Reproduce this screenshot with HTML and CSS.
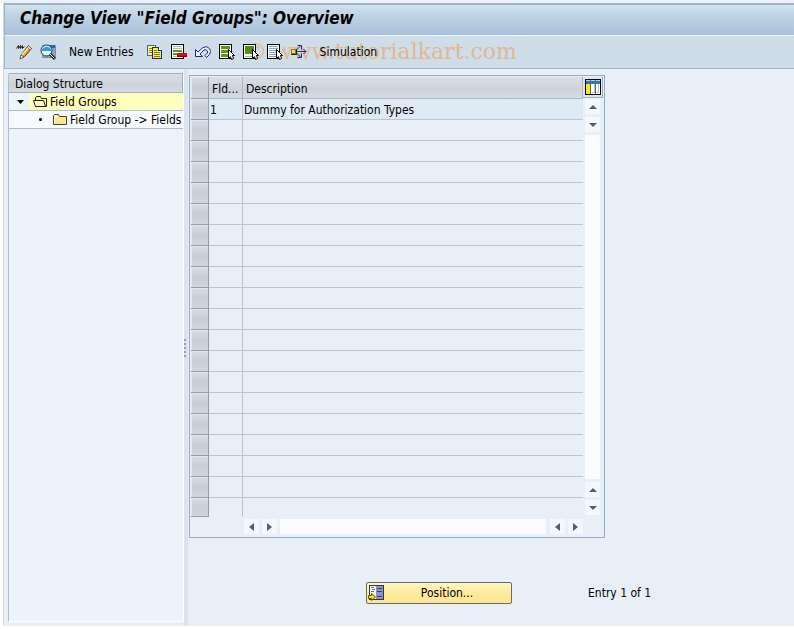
FILE: index.html
```html
<!DOCTYPE html>
<html lang="en">
<head>
    <meta charset="UTF-8">
    <meta name="viewport" content="width=device-width, initial-scale=1.0">
    <title>Change View "Field Groups": Overview</title>
    <link rel="stylesheet" href="styles.css">
</head>
<body>

<div class="window">
    <header class="title-bar">
        <h1>Change View "Field Groups": Overview</h1>
    </header>

    <div class="toolbar">
        <span class="watermark">© www.tutorialkart.com</span>
        <button type="button" class="tool" aria-label="Display / Change">
            <svg class="icon" viewBox="0 0 16 16">
                <path d="M.5 4.500l2-3v3l2-3v3l2-3v3l2-2" fill="none" stroke="#222"/>
                <path d="M12.500 1.500l3 3-7 8-4 2 1-4z" fill="#f4a040" stroke="#5a2a10"/>
                <path d="M12 4l-6 7" stroke="#fff0a0" stroke-width="1.500"/>
                <path d="M12.500 1.500l3 3-1.500 1.500-3-3z" fill="#f8d8b0" stroke="#5a2a10" stroke-width=".5"/>
                <path d="M4 15l1-4 3 2z" fill="#fff" stroke="#222" stroke-width=".6"/>
            </svg>
        </button>
        <button type="button" class="tool" aria-label="Details">
            <svg class="icon" viewBox="0 0 16 16">
                <path d="M2.500 1.500h13v12h-13z" fill="#8ba9c2" stroke="#7890a8"/>
                <path d="M3 1h12v3H3z" fill="#2469ac"/>
                <circle cx="6.500" cy="6.500" r="5.500" fill="#e9f6ff" stroke="#263647"/>
                <path d="M2 5q4.500-5 9 0v2H2z" fill="#2d9bef"/>
                <path d="M10 10l5 5" stroke="#222" stroke-width="3"/>
                <path d="M10 10l4.500 4.500" stroke="#e8eef4" stroke-width="1"/>
            </svg>
        </button>
        <button type="button" class="tool tool-text">New Entries</button>
        <button type="button" class="tool" aria-label="Copy As">
            <svg class="icon" viewBox="0 0 16 16" shape-rendering="crispEdges">
                <path d="M.5 1.500h8v10h-8z" fill="#ffff63" stroke="#5c5c98"/>
                <path d="M2 4.500h3M2 6.500h3M2 8.500h3" stroke="#77779a"/>
                <path d="M5.500 3.500h6l3 3v8h-9z" fill="#fff21c" stroke="#2020a0"/>
                <path d="M11.500 3.500v3h3" fill="#fff" stroke="#2020a0"/>
                <path d="M7 6.500h3M7 8.500h6M7 10.500h6M7 12.500h6" stroke="#77773a"/>
            </svg>
        </button>
        <button type="button" class="tool" aria-label="Delete">
            <svg class="icon" viewBox="0 0 16 16" shape-rendering="crispEdges">
                <path d="M.5 .5h12v14H.5z" fill="#fff" stroke="#000"/>
                <path d="M2 2.500h9M2 4.500h9M2 12.500h5" stroke="#a8bbc8"/>
                <path d="M2 6h9v2H2zM2 9h4v2H2z" fill="#5f9c08"/>
                <path d="M6 9h10v4H6z" fill="#e60012"/>
                <path d="M6 12h10v1H6z" fill="#8c0010"/>
            </svg>
        </button>
        <button type="button" class="tool" aria-label="Undo Change">
            <svg class="icon" viewBox="0 0 16 16">
                <path d="M.5 5.500v7h7l-2.500-2.500 4-4q1.500-1 3 .5t0 3l-2 2 1.500 2 3-3q2.500-3 0-6t-6.500-1l-5 4.500z" fill="#eaf4ff" stroke="#252590"/>
            </svg>
        </button>
        <button type="button" class="tool" aria-label="Select All">
            <svg class="icon" viewBox="0 0 16 16" shape-rendering="crispEdges">
                <path d="M.5 .5h12v14H.5z" fill="#fff" stroke="#000"/>
                <path d="M2 2h9v3H2zM2 6h9v3H2zM2 10h9v3H2z" fill="#5d980e"/>
                <path d="M9.500 5.500v9l2-2 1 3 2-1-1-3h2z" fill="#fff" stroke="#000" shape-rendering="auto"/>
            </svg>
        </button>
        <button type="button" class="tool" aria-label="Select Block">
            <svg class="icon" viewBox="0 0 16 16" shape-rendering="crispEdges">
                <path d="M.5 .5h12v14H.5z" fill="#fff" stroke="#000"/>
                <path d="M2 2h9v8H2z" fill="#568b10"/>
                <path d="M2 12.500h7" stroke="#9aafc0"/>
                <path d="M9.500 5.500v9l2-2 1 3 2-1-1-3h2z" fill="#fff" stroke="#000" shape-rendering="auto"/>
            </svg>
        </button>
        <button type="button" class="tool" aria-label="Deselect All">
            <svg class="icon" viewBox="0 0 16 16" shape-rendering="crispEdges">
                <path d="M.5 .5h12v14H.5z" fill="#fff" stroke="#000"/>
                <path d="M2 2.500h9M2 4.500h9M2 6.500h7M2 8.500h7M2 10.500h7M2 12.500h7" stroke="#87a4b8"/>
                <path d="M9.500 5.500v9l2-2 1 3 2-1-1-3h2z" fill="#fff" stroke="#000" shape-rendering="auto"/>
            </svg>
        </button>
        <button type="button" class="tool" aria-label="Field Transport">
            <svg class="icon" viewBox="0 0 16 16">
                <path d="M5 7.500h10M5 6.500l5-5M5 8.500l5 5M12.500 5l2.500 2.500-2.500 2.500M6.500 1.500h4v4M6.500 13.500h4v-4" fill="none" stroke="#252590"/>
                <path d="M.5 5.500h4v4h-4z" fill="#ffe81c" stroke="#8a6d10"/>
                <path d="M5.500 5v5.500H0" fill="none" stroke="#222"/>
            </svg>
        </button>
        <button type="button" class="tool tool-text">Simulation</button>
    </div>

    <div class="workspace">
        <aside class="sidebar">
            <h2>Dialog Structure</h2>
            <ul class="tree">
                <li class="tree-row">
                    <span class="toggle"><svg width="7" height="4" viewBox="0 0 7 4"><path d="M0 0h7L3.500 4z"/></svg></span>
                    <a href="#" class="tree-link selected">
                        <svg class="folder" viewBox="0 0 15 13">
                            <path d="M2.500 11.500v-9l1-1h4l1 2h5v8z" fill="#fff3a0" stroke="#222"/>
                            <path d="M2.500 11.500l-2-6h10l2 6z" fill="#fff8bf" stroke="#222"/>
                        </svg>Field Groups</a>
                </li>
                <li class="tree-row child">
                    <span class="toggle"><svg width="3" height="3" viewBox="0 0 3 3"><circle cx="1.500" cy="1.500" r="1.500"/></svg></span>
                    <a href="#" class="tree-link">
                        <svg class="folder" viewBox="0 0 15 13">
                            <path d="M.5 11.500v-9l1-1h4l1 2h7v8z" fill="#fbe98b" stroke="#444"/>
                            <path d="M1.500 10.500v-7h4" fill="none" stroke="#fffbd6"/>
                        </svg>Field Group -&gt; Fields</a>
                </li>
            </ul>
        </aside>

        <div class="splitter"><i></i><i></i><i></i><i></i><i></i></div>

        <main class="content">
            <section class="grid-panel">
                <table class="grid">
                    <colgroup><col class="col-select"><col class="col-id"><col></colgroup>
                    <thead>
                        <tr><th class="select"></th><th>Fld...</th><th>Description</th></tr>
                    </thead>
                    <tbody>
                        <tr class="filled"><td class="select"></td><td>1</td><td>Dummy for Authorization Types</td></tr>
                        <tr><td class="select"></td><td></td><td></td></tr>
                        <tr><td class="select"></td><td></td><td></td></tr>
                        <tr><td class="select"></td><td></td><td></td></tr>
                        <tr><td class="select"></td><td></td><td></td></tr>
                        <tr><td class="select"></td><td></td><td></td></tr>
                        <tr><td class="select"></td><td></td><td></td></tr>
                        <tr><td class="select"></td><td></td><td></td></tr>
                        <tr><td class="select"></td><td></td><td></td></tr>
                        <tr><td class="select"></td><td></td><td></td></tr>
                        <tr><td class="select"></td><td></td><td></td></tr>
                        <tr><td class="select"></td><td></td><td></td></tr>
                        <tr><td class="select"></td><td></td><td></td></tr>
                        <tr><td class="select"></td><td></td><td></td></tr>
                        <tr><td class="select"></td><td></td><td></td></tr>
                        <tr><td class="select"></td><td></td><td></td></tr>
                        <tr><td class="select"></td><td></td><td></td></tr>
                        <tr><td class="select"></td><td></td><td></td></tr>
                        <tr><td class="select"></td><td></td><td></td></tr>
                        <tr><td class="select"></td><td></td><td></td></tr>
                    </tbody>
                </table>

                <div class="side-tools">
                    <button type="button" class="configure" aria-label="Configuration">
                        <svg width="16" height="16" viewBox="0 0 16 16" shape-rendering="crispEdges">
                            <path d="M.5 .5h15v15H.5z" fill="#fff" stroke="#000"/>
                            <path d="M1 2h14v3H1z" fill="#2a78b8"/>
                            <path d="M1 1h14v1H1z" fill="#a5d8f5"/>
                            <path d="M1 5h5v10H1z" fill="#ffe600"/>
                            <path d="M9 5h1v9H7v-1h2zM13 5h1v9h-3v-1h2z" fill="#b8bec8"/>
                            <path d="M5.500 1v14M10.500 1v14" stroke="#5d6b78"/>
                        </svg>
                    </button>
                    <div class="scroll-v">
                        <button type="button" class="arrow" aria-label="Scroll up"><svg width="8" height="4" viewBox="0 0 8 4"><path d="M0 4h8L4 0z"/></svg></button>
                        <button type="button" class="arrow" aria-label="Page up"><svg width="8" height="4" viewBox="0 0 8 4"><path d="M0 0h8L4 4z"/></svg></button>
                        <div class="track"></div>
                        <button type="button" class="arrow" aria-label="Page down"><svg width="8" height="4" viewBox="0 0 8 4"><path d="M0 4h8L4 0z"/></svg></button>
                        <button type="button" class="arrow" aria-label="Scroll down"><svg width="8" height="4" viewBox="0 0 8 4"><path d="M0 0h8L4 4z"/></svg></button>
                    </div>
                </div>

                <div class="scroll-h">
                    <button type="button" class="arrow" aria-label="Scroll left"><svg width="5" height="8" viewBox="0 0 5 8"><path d="M5 0v8L0 4z"/></svg></button>
                    <button type="button" class="arrow" aria-label="Page left"><svg width="5" height="8" viewBox="0 0 5 8"><path d="M0 0v8l5-4z"/></svg></button>
                    <div class="track"></div>
                    <button type="button" class="arrow" aria-label="Page right"><svg width="5" height="8" viewBox="0 0 5 8"><path d="M5 0v8L0 4z"/></svg></button>
                    <button type="button" class="arrow" aria-label="Scroll right"><svg width="5" height="8" viewBox="0 0 5 8"><path d="M0 0v8l5-4z"/></svg></button>
                </div>
            </section>

            <div class="actions">
                <button type="button" class="position-button">
                    <svg width="16" height="16" viewBox="0 0 16 16" shape-rendering="crispEdges">
                        <path d="M1.500 .5h14v14h-14z" fill="#f2f5fc" stroke="#2c3550"/>
                        <path d="M8 1h7v13H8z" fill="#8b96c0"/>
                        <path d="M9 3.500h5M9 6.500h5M9 11.500h5" stroke="#39446c"/>
                        <path d="M3 2.500h3M4 4.500h3M3 6.500h3" stroke="#66738f"/>
                        <path d="M.5 10.500h3v-2l4 3.500-4 3.500v-2h-3z" fill="#ffe600" stroke="#5c5000" shape-rendering="auto"/>
                    </svg>
                    <span>Position...</span>
                </button>
                <span>Entry 1 of 1</span>
            </div>
        </main>
    </div>
</div>

</body>
</html>
```
FILE: styles.css
```css
* {
    box-sizing: border-box;
}
body {
    margin: 0;
    background-color: #fff;
    color: #000;
    font-family: "DejaVu Sans Condensed", "DejaVu Sans", sans-serif;
    font-size: 12px;
    line-height: 16px;
}
button {
    margin: 0;
    padding: 0;
    border: none;
    background: none;
    color: inherit;
    font: inherit;
    cursor: pointer;
}
svg {
    display: block;
    flex: none;
}
.window {
    display: flex;
    flex-direction: column;
    min-height: 100vh;
    border-top: 3px solid #edf1f9;
    border-bottom: 3px solid #fff;
    padding-left: 4px;
    background: linear-gradient(to right, #fff 3px, #d0d9e5 3px, #d0d9e5 4px, #e8eff6 4px);
}

/* title and toolbar */
.title-bar {
    height: 33px;
    border-top: 2px solid #9db2cb;
    border-bottom: 1px solid #eef5fb;
    border-left: 1px solid #9db2cb;
    padding: 0 15px;
    background: linear-gradient(#d0e2ee, #bdd2e1 40%, #a8c1dc);
}
h1 {
    margin: 0;
    font-size: 17px;
    font-style: italic;
    font-weight: bold;
    line-height: 26px;
}
.toolbar {
    position: relative;
    display: flex;
    align-items: center;
    gap: 8px;
    height: 33px;
    border-bottom: 1px solid #a3b5cc;
    border-left: 1px solid #a3b5cc;
    padding: 0 11px;
    background-color: #cfdde8;
}
.icon {
    width: 16px;
    height: 16px;
}
.tool {
    position: relative;
}
.tool-text {
    padding: 0 5px;
}
.watermark {
    position: absolute;
    left: 240px;
    top: 0;
    color: #e2b791;
    font-family: "DejaVu Serif", serif;
    font-size: 22px;
    line-height: 32px;
    white-space: nowrap;
    pointer-events: none;
}

/* dialog tree */
.workspace {
    display: flex;
    flex: 1;
    padding-left: 4px;
}
.sidebar {
    width: 176px;
    margin: 4px 0;
    border: 1px solid #fff;
    border-left-color: #b3bccd;
    background-color: #ebf3fb;
}
h2 {
    height: 20px;
    margin: -1px 0 0;
    border: 1px solid #9eafc4;
    border-left: none;
    padding: 0 6px;
    background: linear-gradient(#dde1e6, #cdd2da 60%, #d8dde2);
    font-size: 12px;
    font-weight: normal;
    line-height: 20px;
}
.tree {
    margin: 0;
    padding: 0;
    list-style: none;
}
.tree-row {
    display: flex;
    height: 18px;
    border-bottom: 1px solid #a9bccf;
    line-height: 18px;
}
.tree-row.child {
    padding-left: 20px;
    background-color: #f7fafe;
}
.toggle {
    display: flex;
    align-items: center;
    justify-content: center;
    width: 20px;
    padding-left: 3px;
}
.tree-link {
    display: flex;
    flex: 1;
    align-items: center;
    gap: 2px;
    padding-left: 4px;
    color: #000;
    text-decoration: none;
    white-space: nowrap;
}
.tree-link.selected {
    background-color: #ffffbd;
}
.folder {
    width: 15px;
    height: 13px;
}
.splitter {
    display: flex;
    flex-direction: column;
    align-items: flex-start;
    justify-content: center;
    gap: 2px;
    width: 4px;
    background-color: #d9e4ec;
}
.splitter i {
    width: 2px;
    height: 2px;
    background-color: #8fa3b8;
}

/* grid */
.content {
    flex: 1;
    padding: 6px 1px;
}
.grid-panel {
    display: grid;
    grid-template-columns: 1fr 20px;
    width: 416px;
    border: 1px solid #8facc8;
    padding: 1px;
}
.grid {
    width: 100%;
    border-collapse: separate;
    border-spacing: 0;
    table-layout: fixed;
}
.col-select {
    width: 18px;
}
.col-id {
    width: 34px;
}
.grid th,
.grid td {
    height: 21px;
    border-right: 1px solid #b9c4d5;
    border-bottom: 1px solid #b9c4d5;
    padding: 2px 1px 0;
    font-weight: normal;
    text-align: left;
    white-space: nowrap;
}
.grid th {
    height: 22px;
    border-color: #a8b5c5;
    padding: 2px 2px 0 3px;
    background: linear-gradient(#dcdfe3, #cdd1da 60%, #d8dde2);
}
.grid td:last-child {
    border-right: none;
}
.grid .select {
    border-color: #929eb0;
    background: linear-gradient(#d9dce1, #c8cdd6 50%, #d2d6dc);
    box-shadow: inset 1px 1px #e3e6ea;
}
.grid .filled td:not(.select) {
    background-color: #deeaf4;
}
.grid tr:last-child td {
    height: 19px;
}
.grid tr:last-child td:not(.select) {
    border-bottom-color: transparent;
}
.side-tools {
    display: flex;
    flex-direction: column;
}
.configure {
    display: flex;
    align-items: center;
    justify-content: center;
    height: 21px;
    border-right: 1px solid #9eafc4;
    border-bottom: 1px solid #9eafc4;
    background-color: #dfe5ee;
}
.scroll-v {
    display: flex;
    flex: 1;
    flex-direction: column;
    gap: 3px;
    padding: 1px 3px 2px 2px;
}
.scroll-h {
    display: flex;
    gap: 3px;
    height: 19px;
    padding: 2px 0 2px 53px;
}
.scroll-h .track {
    margin-right: 1px;
}
.arrow {
    display: flex;
    align-items: center;
    justify-content: center;
    width: 15px;
    height: 15px;
    background-color: #f4f8fc;
}
.scroll-h .arrow {
    width: 15px;
}
.arrow path {
    fill: #4c6070;
}
.track {
    flex: 1;
    background-color: #fafbfd;
}

/* below the grid */
.actions {
    display: flex;
    align-items: center;
    gap: 76px;
    margin-top: 44px;
    padding-left: 177px;
}
.position-button {
    display: flex;
    align-items: center;
    width: 146px;
    height: 22px;
    border: 1px solid #6e6a62;
    border-radius: 2px;
    padding: 0 1px;
    background: linear-gradient(#fff5c4, #ffeb9c 50%, #fde593);
}
.position-button span {
    flex: 1;
}
```
